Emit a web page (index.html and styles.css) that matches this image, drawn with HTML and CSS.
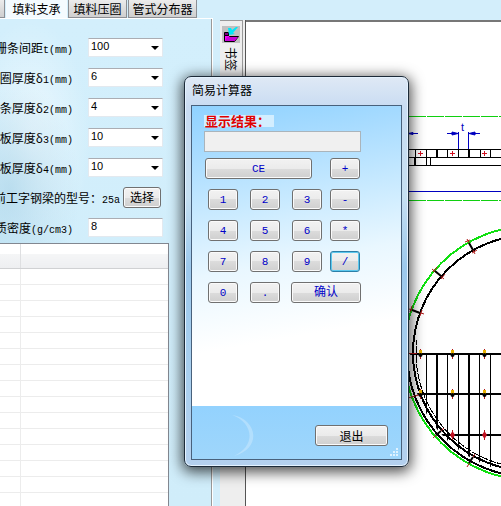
FILE: index.html
```html
<!DOCTYPE html>
<html lang="zh-CN">
<head>
<meta charset="utf-8">
<title>简易计算器</title>
<link rel="stylesheet" href="styles.css">
</head>
<body>
<div class="app">
  <section class="side">
    <nav class="tabs">
      <button class="tab stub" type="button" aria-label="上一页"></button>
      <button class="tab active" type="button">填料支承</button>
      <button class="tab" type="button">填料压圈</button>
      <button class="tab wide" type="button">管式分布器</button>
    </nav>
    <div class="page">
      <form class="form">
        <div class="row">
          <label for="pitch">栅条间距<span class="lat">t(mm)</span></label>
          <span class="combo"><select id="pitch"><option>100</option></select></span>
        </div>
        <div class="row">
          <label for="d1">圈厚度<span class="greek">δ</span><span class="lat">1(mm)</span></label>
          <span class="combo"><select id="d1"><option>6</option></select></span>
        </div>
        <div class="row">
          <label for="d2">条厚度<span class="greek">δ</span><span class="lat">2(mm)</span></label>
          <span class="combo"><select id="d2"><option>4</option></select></span>
        </div>
        <div class="row">
          <label for="d3">板厚度<span class="greek">δ</span><span class="lat">3(mm)</span></label>
          <span class="combo"><select id="d3"><option>10</option></select></span>
        </div>
        <div class="row">
          <label for="d4">板厚度<span class="greek">δ</span><span class="lat">4(mm)</span></label>
          <span class="combo"><select id="d4"><option>10</option></select></span>
        </div>
        <div class="row model">
          <span class="caption">前工字钢梁的型号：<span class="lat">25a</span></span>
          <button class="btn pick" type="button">选择</button>
        </div>
        <div class="row">
          <label for="density">质密度<span class="lat">(g/cm3)</span></label>
          <input class="field" id="density" type="text" value="8">
        </div>
      </form>
      <div class="grid-box">
        <table class="list">
          <thead><tr><th class="first"></th><th></th></tr></thead>
          <tbody>
            <tr><td></td><td></td></tr><tr><td></td><td></td></tr><tr><td></td><td></td></tr>
            <tr><td></td><td></td></tr><tr><td></td><td></td></tr><tr><td></td><td></td></tr>
            <tr><td></td><td></td></tr><tr><td></td><td></td></tr><tr><td></td><td></td></tr>
            <tr><td></td><td></td></tr><tr><td></td><td></td></tr><tr><td></td><td></td></tr>
            <tr><td></td><td></td></tr><tr><td></td><td></td></tr><tr><td></td><td></td></tr>
          </tbody>
        </table>
      </div>
    </div>
  </section>

  <aside class="strip">
    <button class="bookmark" type="button">
      <svg class="bookmark-icon" viewBox="0 0 18 17" width="18" height="17" aria-hidden="true">
        <rect width="18" height="17" fill="#c0c0c0"/>
        <path d="M2.500 6.500h4v4h-4z" fill="#800080" stroke="#000"/>
        <path d="M2.500 15.500v-6h4l1 1h9l-4 5z" fill="#f0f" stroke="#000"/>
        <path d="M3 15l2-4h11l-3.500 4z" fill="#c800d8"/>
        <path d="M6 2h3l1 2 4-3 2 0-5 6 2 1-6 1z" fill="#00e8f8"/>
      </svg>
      <span>书签</span>
    </button>
  </aside>

  <main class="drawing">
    <svg viewBox="246 22 255 484" preserveAspectRatio="xMinYMin slice" role="img" aria-label="支承栅板图">
      <defs>
        <clipPath id="plate"><circle cx="531" cy="353" r="121"/></clipPath>
        <clipPath id="lower"><rect x="247" y="340" width="254" height="166"/></clipPath>
      </defs>
      <g fill="none" stroke="#10d010" stroke-dasharray="17 1">
        <path d="M247 116.500H501M247 200.500H501"/>
      </g>
      <g fill="none" stroke="#0000c0">
        <path d="M247 133.500H418M447 133.500H458M468 133.500H480M458.500 132V149M468.500 132V149M247 191.500H501"/>
        <path d="M458 133.500l-6-1.500v3zM469 133.500l6-1.500v3zM408 133.500l5-1v2z" fill="#0000c0"/>
      </g>
      <text class="dim" x="461" y="131">t</text>
      <g fill="none" stroke="#000">
        <path d="M247 149.500H501M247 157.500H501M247 165.500H501M415.500 149V157M426.500 149V165M430.500 157V165M447.500 149V157M458.500 149V157M480.500 149V157M490.500 149V157"/>
        <path d="M437 149V157M469 149V157M415 157V165" stroke-width="2"/>
      </g>
      <path d="M418 153.500h5M420.500 151v5M450 153.500h5M452.500 151v5M482 153.500h5M484.500 151v5" stroke="#d01020"/>
      <g fill="none" shape-rendering="crispEdges">
        <circle cx="531" cy="353" r="127" stroke="#10e010" stroke-width="2"/>
        <circle cx="531" cy="353" r="118" stroke="#000" stroke-width="2"/>
        <g clip-path="url(#lower)" stroke="#000">
          <circle cx="531" cy="353" r="124" stroke-width="2"/>
          <circle cx="531" cy="353" r="115" stroke-dasharray="8 1"/>
        </g>
      </g>
      <g clip-path="url(#plate)" stroke="#000" fill="none">
        <path d="M408 354H501M408 394H501M436 435H501M437 354V506M469 354V506" stroke-width="2"/>
        <path d="M426.500 354V506M447.500 354V506M458.500 354V506M479.500 354V506M490.500 354V506"/>
      </g>
      <g stroke="#b01818">
        <path d="M467 239l8 15M432 269l12 10M409 309l15 5M409 353.500h8M408 398l14-4M433 438l11-10M467 467l8-13"/>
        <path d="M465 242l5-2M472 253l5-3M433 272l4-5M441 279l4-5M412 306l-2 6M422 310l-2 6"/>
        <path d="M420.500 349v10M452.500 349v10M484.500 349v10M420.500 389v10M452.500 389v10M484.500 389v10M452.500 430v10M484.500 430v10"/>
      </g>
      <path d="M469 243l4 7M435 271l6 5M412 310l8 3M436 435l5-4M469 463l4-6" stroke="#000" stroke-width="2"/>
      <g fill="#e8b000">
        <path d="M419 350h3v4h-3zM451 350h3v4h-3zM483 350h3v4h-3zM419 390h3v4h-3zM451 390h3v4h-3zM483 390h3v4h-3z"/>
      </g>
      <g fill="#000">
        <circle cx="420.500" cy="355" r="2"/><circle cx="452.500" cy="355" r="2"/><circle cx="484.500" cy="355" r="2"/>
        <circle cx="420.500" cy="395" r="2"/><circle cx="452.500" cy="395" r="2"/><circle cx="484.500" cy="395" r="2"/>
      </g>
      <path d="M450 435l2.500-4 2.500 4-2.500 4zM482 435l2.500-4 2.500 4-2.500 4z" fill="#c01020"/>
    </svg>
  </main>
</div>

<div class="dialog" role="dialog" aria-labelledby="dlg-title">
  <h1 class="title" id="dlg-title">简易计算器</h1>
  <div class="client">
    <div class="calc">
      <label class="result-label" for="result">显示结果：</label>
      <input class="result" id="result" type="text" readonly>
      <div class="top-keys">
        <button class="btn key clear" type="button">CE</button>
        <button class="btn key" type="button">+</button>
      </div>
      <div class="keys">
        <button class="btn key" type="button">1</button>
        <button class="btn key" type="button">2</button>
        <button class="btn key" type="button">3</button>
        <button class="btn key" type="button">-</button>
        <button class="btn key" type="button">4</button>
        <button class="btn key" type="button">5</button>
        <button class="btn key" type="button">6</button>
        <button class="btn key" type="button">*</button>
        <button class="btn key" type="button">7</button>
        <button class="btn key" type="button">8</button>
        <button class="btn key" type="button">9</button>
        <button class="btn key focus" type="button">/</button>
        <button class="btn key" type="button">0</button>
        <button class="btn key" type="button">.</button>
        <button class="btn key ok" type="button">确认</button>
      </div>
    </div>
    <div class="footer">
      <svg class="moon" viewBox="0 0 40 46" width="40" height="46" aria-hidden="true">
        <path d="M14 2C40 6 44 36 16 43C38 33 36 10 14 2z" fill="#fff" opacity=".25"/>
      </svg>
      <button class="btn exit" type="button">退出</button>
      <svg class="grip" viewBox="0 0 9 9" width="9" height="9" aria-hidden="true">
        <path d="M6 0h2v2h-2zM3 3h2v2h-2zM6 3h2v2h-2zM0 6h2v2h-2zM3 6h2v2h-2zM6 6h2v2h-2z" fill="#dff2ff"/>
      </svg>
    </div>
  </div>
</div>
</body>
</html>
```

FILE: styles.css
```css
* { box-sizing: border-box; }

body {
  margin: 0;
  overflow: hidden;
  font: 12px/16px "Noto Sans CJK SC", sans-serif;
  color: #000;
  background: #d3eefb;
}

button, input, select {
  margin: 0;
  padding: 0;
  font: inherit;
  color: inherit;
}

.app {
  display: flex;
  height: 100vh;
}

/* left form */
.side {
  display: flex;
  flex-direction: column;
  flex: none;
  width: 213px;
  background: #d3eefb;
}

.tabs {
  display: flex;
  gap: 1px;
  height: 18px;
}

.tab {
  width: 59px;
  border: 1px solid #8c8f94;
  border-top: 0;
  background: linear-gradient(#ececec, #cfcfcf);
  white-space: nowrap;
  line-height: 18px;
}

.tab.stub { width: 5px; border-left: 0; }
.tab.active { width: 61px; border: 0; background: #f4fbff; line-height: 16px; }
.tab.wide { width: 69px; }

.page {
  flex: 1;
  overflow: hidden;
  border-top: 1px solid #fff;
  border-right: 1px solid #fff;
  box-shadow: inset -1px 0 #9a9a9a;
  background:
    radial-gradient(ellipse at 10px 170px, rgba(150, 200, 225, .5), transparent 70px),
    radial-gradient(ellipse at 30px 120px, rgba(255, 255, 255, .6), transparent 60px),
    linear-gradient(#d3effc, #d0edfa);
}

.form {
  display: flex;
  flex-direction: column;
  gap: 12px;
  padding-top: 19px;
}

.row {
  display: flex;
  align-items: center;
  gap: 15px;
  height: 18px;
}

.row label, .caption {
  display: flex;
  justify-content: flex-end;
  align-items: baseline;
  flex: none;
  width: 73px;
  padding-top: 4px;
  overflow: hidden;
  white-space: nowrap;
  line-height: 20px;
}

.row.model { gap: 3px; }
.caption { width: 120px; }

.lat { font-family: "Liberation Mono", monospace; font-size: 10px; }
.greek { width: 12px; text-align: center; }

.combo { position: relative; width: 75px; }

.combo::after {
  content: "";
  position: absolute;
  right: 4px;
  top: 8px;
  border: 4px solid transparent;
  border-top-color: #000;
  border-bottom: 0;
}

.combo select, .field {
  display: block;
  width: 75px;
  height: 19px;
  padding: 0 2px 2px;
  border: 1px solid #e3e9ef;
  border-top-color: #abadb3;
  border-radius: 0;
  background: #fff;
  appearance: none;
  font: 11px/14px "Liberation Sans", sans-serif;
}

.btn {
  border: 1px solid #707070;
  border-radius: 3px;
  box-shadow: inset 0 0 0 1px #fafafa;
  background: linear-gradient(#f2f2f2, #ebebeb 50%, #dcdcdc 50%, #cfcfcf);
  white-space: nowrap;
}

.pick { flex: none; width: 38px; height: 21px; }

.grid-box {
  width: 169px;
  margin-top: 7px;
  height: 270px;
  border: 1px solid #828790;
  border-left: 0;
  background: #fff;
}

.list {
  width: 100%;
  border-collapse: collapse;
  table-layout: fixed;
}

.list th {
  height: 24px;
  padding: 0;
  border-bottom: 1px solid #d0d1d3;
  background: linear-gradient(#fff 40%, #f5f6f7 40%, #eeeff1);
}

.list .first { width: 20px; border-right: 1px solid #dedfe1; }
.list td { height: 16px; padding: 0; border-bottom: 1px solid #ececec; }
.list td:first-child { border-right: 1px solid #ececec; }

/* bookmark strip */
.strip {
  flex: none;
  width: 33px;
  margin-top: 20px;
  border-left: 7px solid #d3eefb;
  border-right: 1px solid #555;
  background: #eee;
}

.bookmark {
  display: flex;
  flex-direction: column;
  align-items: center;
  gap: 4px;
  width: 23px;
  height: 56px;
  padding-top: 5px;
  border: 1px solid #999;
  border-left: 0;
  border-bottom: 0;
  background: #eee;
}

.bookmark-icon { display: block; flex: none; }

.bookmark span {
  writing-mode: vertical-rl;
  text-orientation: sideways;
  line-height: 16px;
}

.drawing {
  flex: 1;
  min-width: 0;
  margin-top: 20px;
  border-top: 2px solid #777;
  background: #fff;
}

.drawing svg { display: block; width: 100%; height: 100%; }
.dim { font: 11px "Liberation Sans", sans-serif; fill: #0000c0; }

/* calculator window */
.dialog {
  position: absolute;
  left: 184px;
  top: 76px;
  width: 225px;
  padding: 0 6px 6px;
  border: 1px solid #1c2a38;
  border-radius: 7px;
  box-shadow: inset 0 0 0 1px #e4f2ff, 0 3px 14px 2px rgba(0, 0, 0, .7);
  background: linear-gradient(#dfe9f5, #c9dcf2 30px, #c6e0f2 120px, #9cc8ec 190px, #a9cfee 300px, #b4d0ee);
}

.title {
  height: 28px;
  margin: 0;
  padding-left: 1px;
  font-size: 12px;
  font-weight: 400;
  line-height: 26px;
}

.client {
  border: 1px solid #48617c;
  background: linear-gradient(170deg, #8fd2ff, #a9dcff 50px, #c9eaff 110px, #e9f7ff 170px, #fff 245px);
}

.calc {
  display: flex;
  flex-direction: column;
  align-items: flex-start;
  padding: 9px 40px 103px 12px;
}

.result-label {
  width: 70px;
  height: 12px;
  padding-left: 1px;
  background: #d3eeff;
  color: #e00000;
  font-size: 13px;
  font-weight: 700;
  line-height: 12px;
  white-space: nowrap;
}

.result {
  width: 100%;
  height: 21px;
  margin-top: 4px;
  border: 1px solid #aab4bb;
  background: #f0f0f0;
}

.top-keys {
  display: flex;
  justify-content: space-between;
  width: 100%;
  margin-top: 6px;
  padding: 0 1px;
}

.key {
  width: 30px;
  height: 21px;
  color: #0000c8;
  font: 11px/16px "Liberation Mono", "Noto Sans CJK SC", monospace;
}

.clear { width: 107px; }

.keys {
  display: grid;
  grid-template-columns: 42px 42px 38px 30px;
  gap: 10px 0;
  margin-top: 10px;
  padding-left: 4px;
}

.focus {
  border-color: #2c7fa8;
  box-shadow: inset 0 0 0 1px #5cc8ee;
}

.ok {
  grid-column: 3 / 5;
  justify-self: center;
  width: 70px;
  font-size: 12px;
}

.footer {
  display: flex;
  position: relative;
  justify-content: space-between;
  align-items: center;
  height: 53px;
  padding: 6px 13px 0 26px;
  background: linear-gradient(#93d2fe, #9fd6fb);
}

.exit { width: 73px; height: 21px; }

.grip {
  position: absolute;
  right: 2px;
  bottom: 2px;
}
```
